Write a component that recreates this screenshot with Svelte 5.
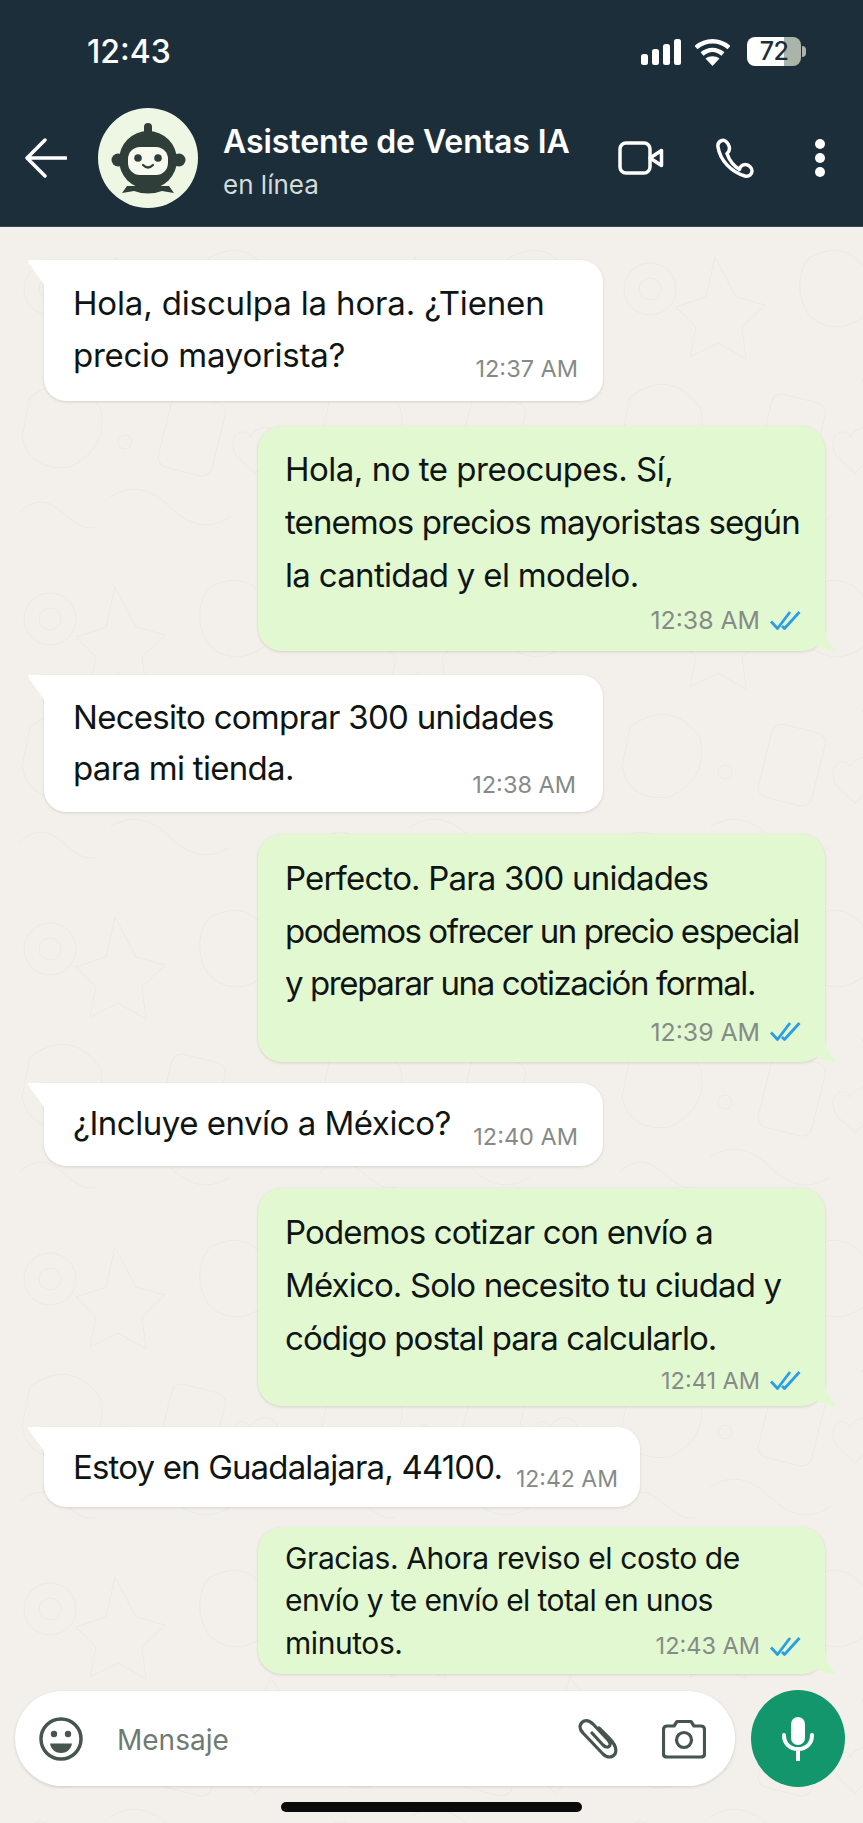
<script lang="ts">
  // ls is per-line tracking: the reference's text is narrower than Inter and not evenly so
  const messages = [
    { dir: "in", time: "12:37 AM", ts: 23.5, lh: 52, gap: 33, pt: 17, pb: 14, lift: -30, pr: 25, w: 559,
      lines: [["Hola, disculpa la hora. ¿Tienen", -0.15], ["precio mayorista?", -0.27]] },
    { dir: "out", time: "12:38 AM", ts: 24.8, lh: 53, gap: 25, pt: 17, pb: 13, lift: 0, pr: 24, w: 568,
      lines: [["Hola, no te preocupes. Sí,", -0.49], ["tenemos precios mayoristas según", -0.9], ["la cantidad y el modelo.", -0.68]] },
    { dir: "in", time: "12:38 AM", ts: 23.5, lh: 51, gap: 24, pt: 17, pb: 9, lift: -27, pr: 27, w: 559,
      lines: [["Necesito comprar 300 unidades", -0.72], ["para mi tienda.", -0.7]] },
    { dir: "out", time: "12:39 AM", ts: 24.8, lh: 52.5, gap: 22, pt: 18, pb: 12, lift: 4, pr: 24, w: 568,
      lines: [["Perfecto. Para 300 unidades", -0.82], ["podemos ofrecer un precio especial", -1.44], ["y preparar una cotización formal.", -0.14 * 10]] },
    { dir: "in", time: "12:40 AM", ts: 23.5, lh: 52, gap: 21, pt: 14, pb: 11, lift: -30, pr: 25, w: 559,
      lines: [["¿Incluye envío a México?", -0.48]] },
    { dir: "out", time: "12:41 AM", ts: 23.5, lh: 53, gap: 22, pt: 18, pb: 7, lift: -2, pr: 24, w: 568,
      lines: [["Podemos cotizar con envío a", -0.86], ["México. Solo necesito tu ciudad y", -0.85], ["código postal para calcularlo.", -0.97]] },
    { dir: "in", time: "12:42 AM", ts: 23, lh: 52, gap: 21, pt: 14, pb: 10, lift: -32, pr: 22, w: 596,
      lines: [["Estoy en Guadalajara, 44100.", -0.84]] },
    { dir: "out small", time: "12:43 AM", ts: 23.5, lh: 42.5, gap: 20, pt: 10, pb: 10, lift: -36, pr: 24, w: 568,
      lines: [["Gracias. Ahora reviso el costo de", -0.39], ["envío y te envío el total en unos", -0.6], ["minutos.", -0.44]] },
  ];
</script>

<div class="phone">
  <header class="top">
    <div class="status">
      <span class="clock">12:43</span>
      <div class="status-icons">
        <svg class="signal" width="40" height="26" viewBox="0 0 40 26">
          <rect x="0" y="15" width="7" height="11" rx="2.5" />
          <rect x="11" y="10" width="7" height="16" rx="2.5" />
          <rect x="22" y="5" width="7" height="21" rx="2.5" />
          <rect x="33" y="0" width="7" height="26" rx="2.5" />
        </svg>
        <svg class="wifi" width="35" height="28" viewBox="0 0 35 28">
          <path d="M1 9.500C10.500 1 24.500 1 34 9.500" />
          <path d="M7 16C13.500 10.500 21.500 10.500 28 16" />
          <path class="wedge" d="M17.500 28L10.500 20.500C14.500 17.500 20.500 17.500 24.500 20.500Z" />
        </svg>
        <div class="battery">
          <div class="cell">72</div>
          <div class="nub"></div>
        </div>
      </div>
    </div>
    <div class="chat-bar">
      <svg class="back" width="42" height="40" viewBox="0 0 42 40">
        <path d="M20 2L2 20L20 38M2 20H41" />
      </svg>
      <div class="avatar">
        <svg width="100" height="100" viewBox="0 0 100 100">
          <rect x="46" y="15" width="8" height="20" rx="4" fill="#2f3e38" />
          <circle cx="20" cy="52" r="6.500" fill="#2f3e38" />
          <circle cx="81" cy="52" r="6.500" fill="#2f3e38" />
          <path d="M29 78L24 85L36 83Q50 88 64 83L76 85L71 78Z" fill="#2f3e38" />
          <circle cx="50" cy="52" r="29" fill="#2f3e38" />
          <rect x="30" y="39" width="40" height="28" rx="12" fill="#f6faef" />
          <circle cx="40" cy="50" r="3.800" fill="#2f3e38" />
          <circle cx="60" cy="50" r="3.800" fill="#2f3e38" />
          <path d="M45 57Q50 62 55 57" fill="none" stroke="#2f3e38" stroke-width="2.200" stroke-linecap="round" />
        </svg>
      </div>
      <div class="title">
        <div class="name">Asistente de Ventas IA</div>
        <div class="presence">en línea</div>
      </div>
      <svg class="video" width="46" height="34" viewBox="0 0 46 34">
        <rect x="2" y="2" width="30" height="30" rx="6" />
        <path d="M32 17L43.500 9.500V24.500Z" />
      </svg>
      <svg class="call" width="38" height="40" viewBox="0 0 38 40">
        <path d="M6 2.500C3 3.500 1.500 6 2 9C4 22 15 34 29 38C33 39 36 36.500 36 33C36 30 33 26.500 29.500 26.500C26.500 26.500 24 28.500 23.500 31.500C17 27.500 13 21.500 11 15.500C13.500 13.500 14 11 13 8C12 5 9 1.500 6 2.500Z" />
      </svg>
      <div class="dots"><i></i><i></i><i></i></div>
    </div>
  </header>

  <main class="chat">
    <svg class="wallpaper" width="863" height="1600" aria-hidden="true">
      <defs>
        <pattern id="doodles" width="300" height="330" patternUnits="userSpaceOnUse">
          <g fill="none" stroke="#ece9e3" stroke-width="1">
            <circle cx="50" cy="62" r="26" />
            <circle cx="50" cy="62" r="11" />
            <path d="M115 30L136 70L165 78L142 100L146 132L118 116L90 130L96 100L76 80L106 70Z" />
            <path d="M210 30Q250 10 270 50Q285 90 240 100Q205 100 200 65Q198 42 210 30Z" />
            <path d="M30 170Q70 140 100 180Q110 220 70 240Q30 245 22 210Z" />
            <rect x="165" y="170" width="55" height="75" rx="10" transform="rotate(14 190 205)" />
            <path d="M250 210C262 190 288 205 275 226L255 246L236 228C226 208 244 198 250 210Z" />
            <path d="M110 270Q140 250 170 280T230 290" />
            <path d="M20 285Q40 265 62 285T95 300" />
            <circle cx="125" cy="215" r="7" />
            <path d="M270 130L285 150L262 155Z" />
          </g>
        </pattern>
      </defs>
      <rect width="863" height="1600" fill="url(#doodles)" />
    </svg>

    {#each messages as m}
      <div
        class="bubble {m.dir}"
        style="margin-top: {m.gap}px; width: {m.w}px; line-height: {m.lh}px; padding-top: {m.pt}px; padding-right: {m.pr}px; padding-bottom: {m.pb}px"
      >
        {#each m.lines as [text, ls]}
          <div class="line" style="letter-spacing: {ls}px">{text}</div>
        {/each}
        <div class="meta" style="margin-top: {m.lift}px; font-size: {m.ts}px">
          <span>{m.time}</span>
          {#if m.dir !== "in"}
            <svg class="ticks" width="31" height="21" viewBox="0 0 31 21">
              <path d="M1 11.500L7.500 18.500L20 2M12 16L14.500 18.500L29.500 2" />
            </svg>
          {/if}
        </div>
      </div>
    {/each}
  </main>

  <footer class="bottom">
    <div class="composer">
      <svg class="emoji" width="44" height="44" viewBox="0 0 44 44">
        <circle cx="22" cy="22" r="20" fill="none" />
        <circle class="solid" cx="15" cy="17" r="3.200" />
        <circle class="solid" cx="29" cy="17" r="3.200" />
        <path class="solid" d="M11 26.500H33C32 33 27 36 22 36C17 36 12 33 11 26.500Z" />
      </svg>
      <span class="placeholder">Mensaje</span>
      <svg class="clip" width="42" height="40" viewBox="0 0 42 40">
        <path d="M21 9L31 19C35 23 40 29 37 35C34 39 29 39 25 35L5 14C0 9 2 4 6 2C9 1 12 2 15 5L30 21C32 23 33 26 31 27.500C29 29 27 28 25 26L14 14" />
      </svg>
      <svg class="camera" width="44" height="40" viewBox="0 0 44 40">
        <path d="M5 7H12L15 2.500H29L32 7H39C41 7 42.500 8.500 42.500 10.500V35C42.500 37 41 38 39 38H5C3 38 1.500 37 1.500 35V10.500C1.500 8.500 3 7 5 7Z" />
        <circle cx="22" cy="21" r="7.500" />
      </svg>
    </div>
    <div class="mic">
      <svg width="32" height="44" viewBox="0 0 32 44">
        <rect x="9" y="0" width="14" height="28" rx="7" fill="#fff" />
        <path d="M2 18C2 27 8 32 16 32C24 32 30 27 30 18M16 32V43" fill="none" stroke="#fff" stroke-width="4" stroke-linecap="round" />
      </svg>
    </div>
  </footer>
  <div class="home-bar"></div>
</div>

<style>
  :global(body) {
    background: #f3f0eb;
  }

  .phone {
    width: 863px;
    height: 1823px;
    display: flex;
    flex-direction: column;
    overflow: hidden;
    background: #f3f0eb;
    font-family: Inter, "Liberation Sans", sans-serif;
    color: #0f1513;
  }

  .top {
    height: 227px;
    flex: none;
    background: #1d2e3b;
    color: #fff;
    border-bottom: 1px solid #3a4650;
    box-sizing: border-box;
  }

  .status {
    height: 103px;
    display: flex;
    align-items: flex-start;
    justify-content: space-between;
    padding: 35px 57px 0 87px;
    box-sizing: border-box;
  }

  .clock {
    font-size: 32px;
    line-height: 34px;
    font-weight: 500;
  }

  .status-icons {
    display: flex;
    align-items: center;
    gap: 14px;
    padding-top: 2px;
  }

  .signal {
    fill: #fff;
  }

  .wifi {
    fill: none;
    stroke: #fff;
    stroke-width: 4.500px;
    margin-right: 3px;
  }

  .wifi .wedge {
    fill: #fff;
    stroke: none;
  }

  .battery {
    display: flex;
    align-items: center;
    gap: 1px;
  }

  .cell {
    width: 54px;
    height: 29px;
    border-radius: 8px;
    background: linear-gradient(90deg, #fff 0 68%, #aab4a8 68%);
    color: #1d2e3b;
    font-size: 25px;
    font-weight: 500;
    letter-spacing: -0.5px;
    line-height: 29px;
    text-align: center;
  }

  .nub {
    width: 4px;
    height: 11px;
    border-radius: 0 4px 4px 0;
    background: #aab4a8;
  }

  .chat-bar {
    display: flex;
    align-items: center;
    height: 110px;
    padding-left: 25px;
  }

  .back {
    fill: none;
    stroke: #fff;
    stroke-width: 3.500px;
    stroke-linecap: round;
    stroke-linejoin: round;
  }

  .avatar {
    width: 100px;
    height: 100px;
    margin-left: 31px;
    border-radius: 50%;
    background: #eef7e3;
    line-height: 0;
  }

  .title {
    width: 347px;
    margin-left: 25px;
    margin-top: 6px;
  }

  .name {
    font-size: 32px;
    letter-spacing: -0.08px;
    line-height: 42px;
    font-weight: 600;
    white-space: nowrap;
  }

  .presence {
    margin-top: 5px;
    font-size: 26px;
    line-height: 34px;
    color: #d3dcd8;
  }

  .video {
    margin-left: 48px;
    fill: none;
    stroke: #fff;
    stroke-width: 3.500px;
    stroke-linejoin: round;
  }

  .call {
    margin-left: 52px;
    fill: none;
    stroke: #fff;
    stroke-width: 3.500px;
    stroke-linejoin: round;
  }

  .dots {
    display: flex;
    flex-direction: column;
    gap: 4px;
    margin-left: 61px;
  }

  .dots i {
    width: 10px;
    height: 10px;
    border-radius: 50%;
    background: #fff;
  }

  .chat {
    position: relative;
    flex: 1;
    display: flex;
    flex-direction: column;
    min-height: 0;
  }

  .wallpaper {
    position: absolute;
    top: 0;
    left: 0;
  }

  .bubble {
    position: relative;
    box-sizing: border-box;
    font-size: 33px;
    box-shadow: 0 1px 3px rgba(60, 50, 40, 0.16);
  }

  .line {
    white-space: nowrap;
  }

  .bubble.in {
    margin-left: 44px;
    background: #fff;
    border-radius: 0 22px 22px 22px;
    padding-left: 29px;
  }

  .bubble.in::before {
    content: "";
    position: absolute;
    top: 0;
    left: -16px;
    width: 17px;
    height: 26px;
    background: #fff;
    clip-path: polygon(0 2px, 1px 0, 100% 0, 100% 100%);
  }

  .bubble.out {
    margin-left: 258px;
    margin-right: 38px;
    align-self: flex-end;
    background: #e2f8d1;
    border-radius: 24px;
    padding-left: 27px;
    max-width: 567px;
  }

  .bubble.out::after {
    content: "";
    position: absolute;
    right: -14px;
    bottom: 0;
    width: 40px;
    height: 26px;
    background: #e2f8d1;
    clip-path: path("M0 26C8 26 14 24 18 21C24 25 32 26 38 26C32 22 26 12 25 0H0Z");
  }

  .bubble.small {
    font-size: 30px;
  }

  .meta {
    position: relative;
    z-index: 1;
    display: flex;
    justify-content: flex-end;
    align-items: center;
    gap: 10px;
    line-height: 36px;
    color: #858b86;
  }

  .ticks {
    fill: none;
    stroke: #2a9ee5;
    stroke-width: 2.800px;
    stroke-linejoin: round;
  }

  .bottom {
    position: absolute;
    top: 1690px;
    left: 15px;
    display: flex;
    align-items: center;
    gap: 16px;
  }

  .composer {
    width: 720px;
    height: 95px;
    display: flex;
    align-items: center;
    background: #fff;
    border-radius: 48px;
    box-shadow: 0 1px 3px rgba(60, 50, 40, 0.18);
    box-sizing: border-box;
    padding-left: 24px;
  }

  .emoji {
    fill: none;
    stroke: #46554d;
    stroke-width: 3.500px;
  }

  .emoji .solid {
    fill: #46554d;
    stroke: none;
  }

  .placeholder {
    margin-left: 34px;
    margin-top: 3px;
    width: 455px;
    font-size: 28px;
    color: #6f7a72;
  }

  .clip {
    margin-left: 6px;
    fill: none;
    stroke: #46554d;
    stroke-width: 3.200px;
    stroke-linejoin: round;
    stroke-linecap: round;
  }

  .camera {
    margin-left: 42px;
    fill: none;
    stroke: #46554d;
    stroke-width: 3.200px;
    stroke-linejoin: round;
  }

  .mic {
    width: 94px;
    height: 97px;
    border-radius: 50%;
    background: #13966b;
    display: flex;
    align-items: center;
    justify-content: center;
  }

  .home-bar {
    position: absolute;
    top: 1802px;
    left: 281px;
    width: 301px;
    height: 10px;
    border-radius: 5px;
    background: #0a0a0a;
  }
</style>
